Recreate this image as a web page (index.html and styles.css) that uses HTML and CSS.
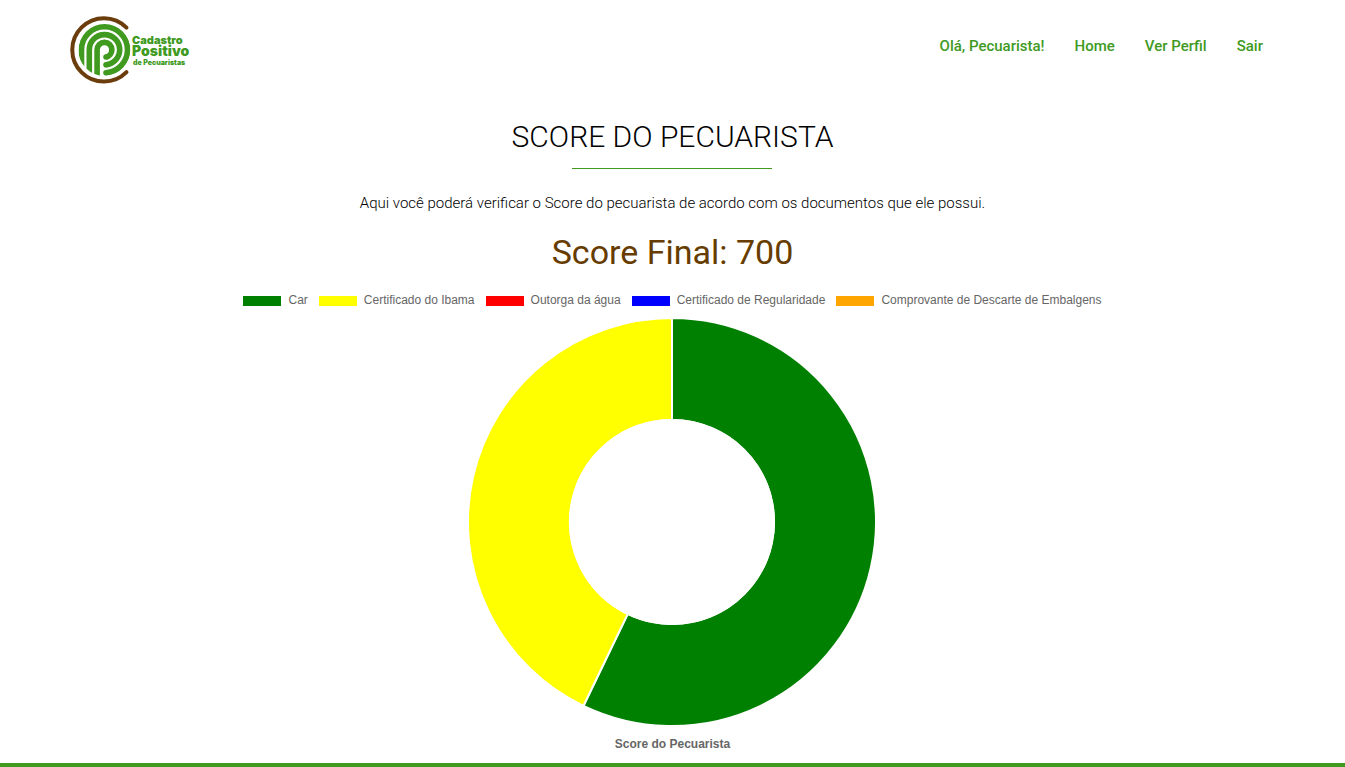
FILE: index.html
```html
<!DOCTYPE html>
<html lang="pt-BR">
<head>
<meta charset="utf-8">
<title>Score do Pecuarista</title>
<link rel="stylesheet" href="styles.css">
</head>
<body>
<header class="header">
  <a class="brand" href="#" aria-label="Cadastro Positivo de Pecuaristas">
    <svg class="logo" width="124" height="72" viewBox="68 14 124 72">
      <defs><clipPath id="disc"><circle cx="104.5" cy="49.8" r="26.2"/></clipPath></defs>
      <path class="ring" d="M126.5 27.6A31.7 31.7 0 1 0 126.5 72.2"/>
      <g class="bands" clip-path="url(#disc)">
        <path d="M81.5 80V49.8A23 23 0 0 1 127.5 49.8A23 23 0 0 1 106 72.7"/>
        <path d="M89.3 80V49.8A15.2 15.2 0 0 1 119.7 49.8A15.2 15.2 0 0 1 106 64.8"/>
        <path d="M97.1 80V49.8A7.4 7.4 0 0 1 111.9 49.8A7.4 7.4 0 0 1 106 57"/>
      </g>
      <g class="ends">
        <circle cx="106" cy="72.7" r="2.8"/>
        <circle cx="106" cy="64.8" r="2.8"/>
        <circle cx="106" cy="57" r="2.8"/>
      </g>
      <g class="wordmark">
        <text class="word-small" x="132" y="44">Cadastro</text>
        <text class="word-large" x="132" y="56">Positivo</text>
        <text class="word-tiny" x="133" y="65">de Pecuaristas</text>
      </g>
    </svg>
  </a>
  <nav class="nav">
    <a href="#">Olá, Pecuarista!</a>
    <a href="#">Home</a>
    <a href="#">Ver Perfil</a>
    <a href="#">Sair</a>
  </nav>
</header>
<main class="main">
  <h1 class="title">SCORE DO PECUARISTA</h1>
  <p class="intro">Aqui você poderá verificar o Score do pecuarista de acordo com os documentos que ele possui.</p>
  <h2 class="score">Score Final: 700</h2>
  <figure class="chart">
    <ul class="legend">
      <li><span class="swatch green"></span>Car</li>
      <li><span class="swatch yellow"></span>Certificado do Ibama</li>
      <li><span class="swatch red"></span>Outorga da água</li>
      <li><span class="swatch blue"></span>Certificado de Regularidade</li>
      <li><span class="swatch orange"></span>Comprovante de Descarte de Embalgens</li>
    </ul>
    <svg class="donut" width="408" height="408" viewBox="-204 -204 408 408" role="img" aria-label="Car 400, Certificado do Ibama 300">
      <path class="slice-car" d="M0 -204A204 204 0 1 1 -88.51 183.8L-44.26 91.9A102 102 0 1 0 0 -102Z"/>
      <path class="slice-ibama" d="M-88.51 183.8A204 204 0 0 1 0 -204V-102A102 102 0 0 0 -44.26 91.9Z"/>
      <circle class="hole" r="103"/>
    </svg>
    <figcaption class="caption">Score do Pecuarista</figcaption>
  </figure>
</main>
<footer class="footer"></footer>
</body>
</html>
```
FILE: styles.css
```css
* { box-sizing: border-box; }
body {
  margin: 0;
  min-height: 100vh;
  display: flex;
  flex-direction: column;
  background: #fff;
  font-family: Roboto, "Liberation Sans", sans-serif;
  color: #000;
}
.header {
  display: flex;
  justify-content: space-between;
  padding: 14px 82px 14px 68px;
}
.brand, .logo { display: block; }
.ring { fill: none; stroke: #6b3c0c; stroke-width: 4; stroke-linecap: round; }
.bands { fill: none; stroke: #409a1f; stroke-width: 5.6; }
.ends, .wordmark { fill: #409a1f; }
.wordmark {
  font-family: Inter, sans-serif;
  font-weight: 900;
}
.word-small { font-size: 11px; }
.word-large { font-size: 14px; }
.word-tiny { font-size: 7px; }
.nav { display: flex; gap: 30px; padding-top: 22px; }
.nav a {
  color: #409a1f;
  font-size: 15px;
  font-weight: 500;
  line-height: 20px;
  text-decoration: none;
}
.main {
  flex: 1;
  display: flex;
  flex-direction: column;
  align-items: center;
  padding: 17px 0 12px;
  text-align: center;
}
.title {
  margin: 0;
  font-size: 30px;
  font-weight: 300;
  line-height: 40px;
}
.title::after {
  content: "";
  display: block;
  width: 200px;
  height: 1px;
  margin: 11px auto 0;
  background: #409a1f;
}
.intro {
  margin: 24px 0 0;
  font-size: 15px;
  font-weight: 300;
  line-height: 20px;
}
.score {
  margin: 19px 0 0;
  color: #663c00;
  font-size: 34px;
  font-weight: 400;
  line-height: 40px;
}
.chart {
  margin: 21px 0 0;
  display: flex;
  flex-direction: column;
  align-items: center;
  font-family: "Liberation Sans", Arial, sans-serif;
  font-size: 12px;
  line-height: 14px;
  color: #666;
}
.legend {
  display: flex;
  flex-wrap: wrap;
  justify-content: center;
  gap: 11px;
  margin: 0;
  padding: 0;
  list-style: none;
}
.legend li { display: flex; align-items: center; gap: 7px; }
.swatch { width: 38px; height: 10px; margin-top: 2px; }
.green { background: #008000; }
.yellow { background: #ff0; }
.red { background: #f00; }
.blue { background: #00f; }
.orange { background: #ffa500; }
.donut { margin-top: 11px; }
.donut path { stroke: #fff; stroke-width: 2; }
.slice-car { fill: #008000; }
.slice-ibama { fill: #ff0; }
.hole { fill: #fff; }
.caption { margin-top: 11px; font-weight: 700; }
.footer { height: 4px; background: #409a1f; }
```
